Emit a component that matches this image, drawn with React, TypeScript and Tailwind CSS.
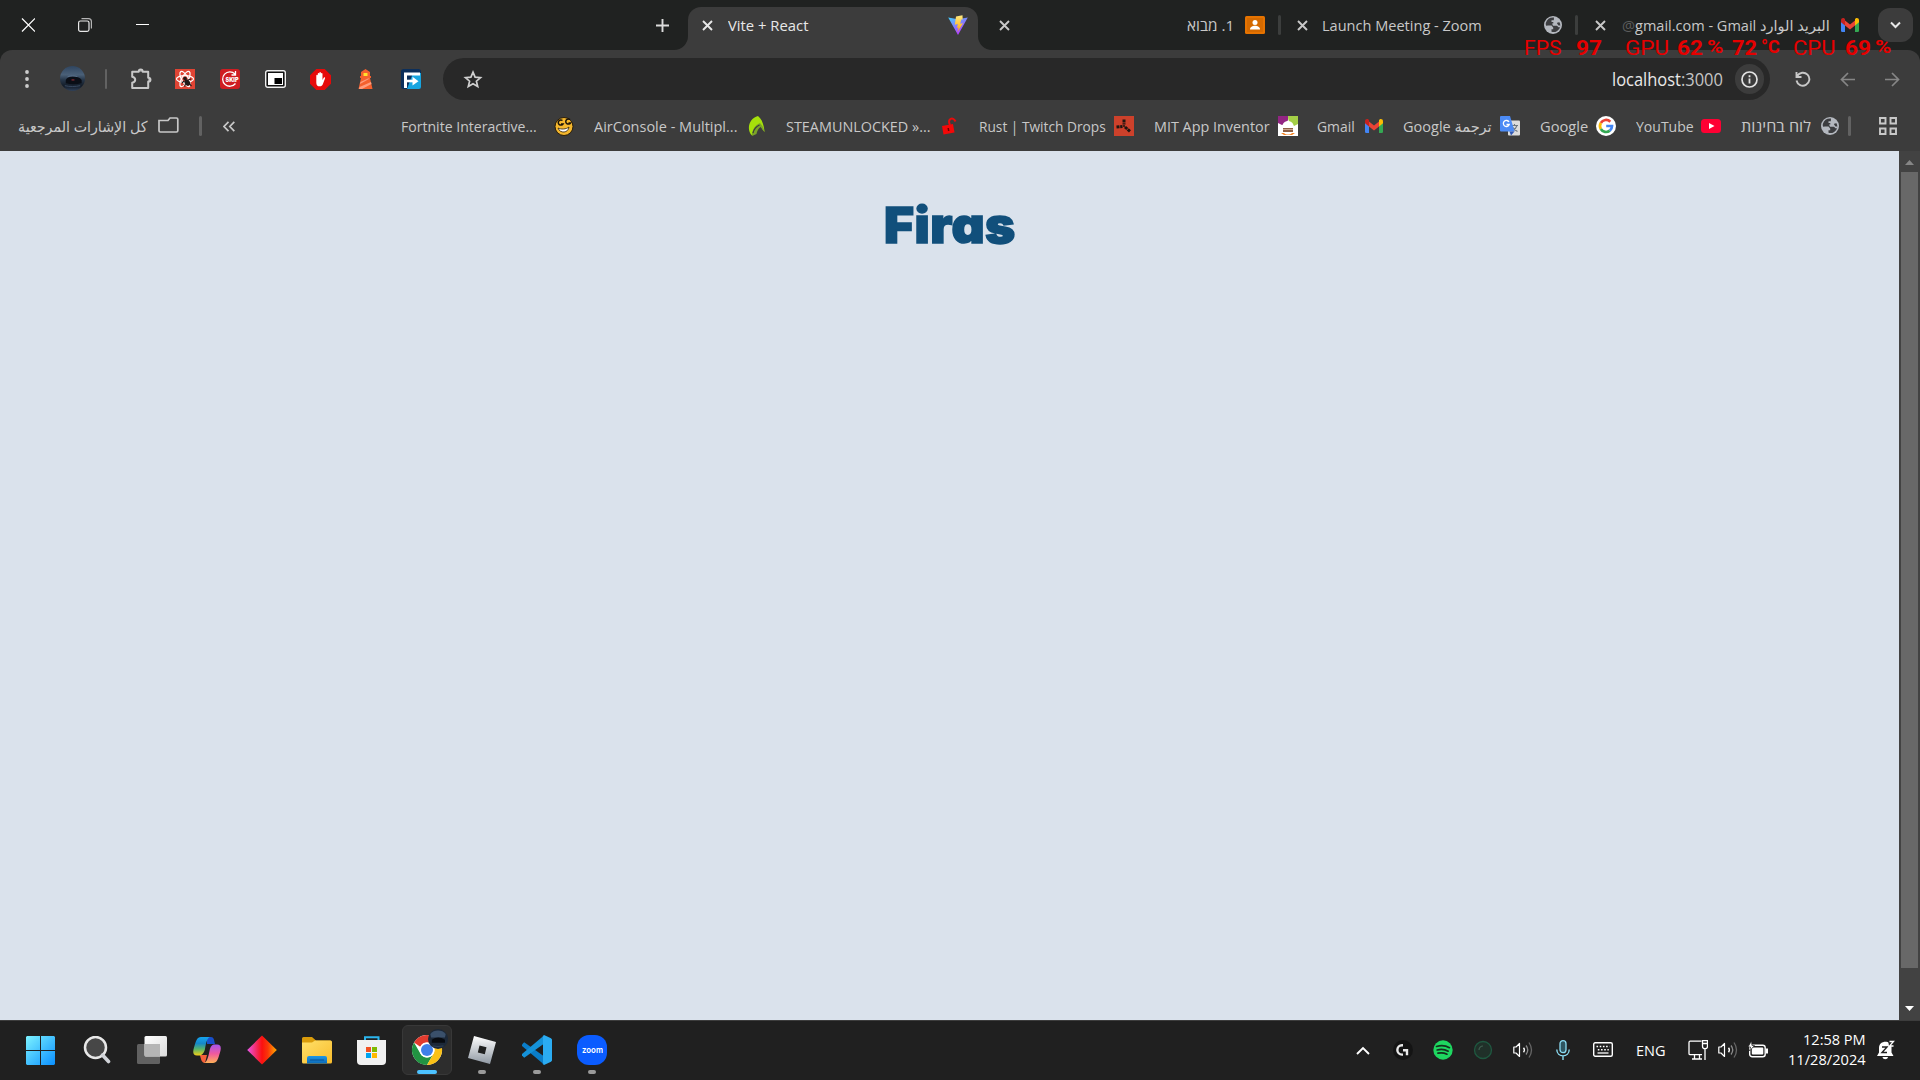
import React, { useLayoutEffect, useRef, useState } from 'react';

type P = { className?: string; children?: React.ReactNode; dir?: 'rtl' | 'ltr' };

/* A single line of text, condensed or widened to fill the width of its box. */
function Fit({ className = '', children, dir = 'ltr' }: P) {
  const outer = useRef<HTMLDivElement>(null);
  const inner = useRef<HTMLSpanElement>(null);
  const [s, setS] = useState(1);
  useLayoutEffect(() => {
    if (outer.current && inner.current) setS(outer.current.clientWidth / inner.current.offsetWidth);
  }, []);
  return (
    <div ref={outer} dir="ltr" className={'shrink-0 whitespace-nowrap ' + className}>
      <span ref={inner} dir={dir} className="inline-block origin-left" style={{ transform: `scaleX(${s})` }}>
        {children}
      </span>
    </div>
  );
}

function Svg({ className = '', vb = '0 0 20 20', children }: P & { vb?: string }) {
  return (
    <svg viewBox={vb} className={'shrink-0 ' + className} fill="none">
      {children}
    </svg>
  );
}

const Cross = ({ className = '' }: P) => (
  <Svg vb="0 0 11 11" className={'h-[11px] w-[11px] ' + className}>
    <path d="M1 1l9 9M10 1l-9 9" stroke="currentColor" strokeWidth="1.9" />
  </Svg>
);

const GmailIcon = ({ className = '' }: P) => (
  <Svg vb="0 0 18 14" className={'h-[14px] w-[18px] ' + className}>
    <path d="M0 3.5h4V14H1.2A1.2 1.2 0 0 1 0 12.8z" fill="#4285f4" />
    <path d="M14 3.5h4v9.300a1.200 1.200 0 0 1-1.200 1.200H14z" fill="#34a853" />
    <path d="M4 2.500l5 4 5-4v5l-5 4-5-4z" fill="#ea4335" />
    <path d="M0 2.200C0 .300 2-.600 3.400.500L4 1v6.500L0 4.300z" fill="#c5221f" />
    <path d="M18 2.200C18 .300 16-.600 14.600.500L14 1v6.500l4-3.200z" fill="#fbbc04" />
  </Svg>
);

const Globe = ({ className = '' }: P) => (
  <Svg vb="0 0 18 18" className={'h-[18px] w-[18px] ' + className}>
    <circle cx="9" cy="9" r="9" fill="#b4b8bf" />
    <path
      d="M10 1.600C6 1.200 3 3.200 2 6.500c-.500 1.500-.200 2.300.200 3.300L4 9.500h3.500l1.700 2v1.800H7.500v2.500c2 .600 4 .200 5.300-.600 2.200-1.300 3.500-3.500 3.500-6 0-1-.300-2-.800-3l-2 .300-.800 1.700H9.300V6H7.500V4.300h2.300z"
      fill="#3c3d40"
    />
    <path d="M8 7.500h5l1.500 2h2v1.800h-2L13 9.800H9z" fill="#b4b8bf" />
  </Svg>
);

const Avatar = ({ className = '' }: P) => (
  <Svg vb="0 0 26 26" className={className}>
    <defs>
      <linearGradient id="sky" x1="0" y1="0" x2="0" y2="1">
        <stop offset="0" stopColor="#2f4560" />
        <stop offset=".35" stopColor="#4a6078" />
        <stop offset=".55" stopColor="#27374a" />
        <stop offset=".8" stopColor="#131c28" />
        <stop offset="1" stopColor="#30415a" />
      </linearGradient>
    </defs>
    <circle cx="13" cy="13" r="13" fill="url(#sky)" />
    <path d="M6 14.500c1-2 3.500-3.500 7.500-3.500s7 1 9 3.500V18q-8.500 2-16.500 0z" fill="#0a0e16" />
    <path d="M8 11c3-1 7-1 10 0" stroke="#5f7896" strokeWidth=".8" />
    <path d="M12 14.500h3" stroke="#a5323a" />
    <path d="M5 20.500c5 1 11 1 16 0" stroke="#3c4e66" />
  </Svg>
);

function TabStrip() {
  return (
    <div className="flex h-[50px] items-center bg-[#202221] text-[15px] text-[#c8c8c8]">
      <Svg vb="0 0 14 14" className="ml-[21px] h-[14px] w-[14px]">
        <path d="M1 .500l13 13M14 .500L1 13.500" stroke="#fff" strokeWidth="1.200" />
      </Svg>
      <Svg vb="0 0 14 14" className="ml-[43px] h-[14px] w-[14px]">
        <rect x=".6" y="3" width="10.400" height="10.400" rx="1.800" stroke="#e8e8e8" strokeWidth="1.200" />
        <path d="M3.500.700h7A2.900 2.900 0 0 1 13.400 3.600v7" stroke="#b5b5b5" strokeWidth="1.200" />
      </Svg>
      <div className="ml-[44px] h-px w-[13px] -translate-y-px bg-white" />
      <Svg vb="0 0 13 13" className="ml-[507px] h-[13px] w-[13px]">
        <path d="M6.500 0v13M0 6.500h13" stroke="#dcdcdc" strokeWidth="1.900" />
      </Svg>
      <Svg vb="0 0 14 14" className="ml-[5px] h-[14px] w-[14px] self-end">
        <path d="M0 14A14 14 0 0 0 14 0v14z" fill="#3c3c3c" />
      </Svg>
      <div className="flex h-[43px] w-[290px] shrink-0 items-center self-end rounded-t-[13px] bg-[#3c3c3c] pb-[7px] text-[#e8e8e8]">
        <Cross className="ml-[14px]" />
        <Fit className="ml-[15px] w-[80px]">Vite + React</Fit>
        <Svg vb="0 0 20 20" className="ml-[140px] h-[20px] w-[20px]">
          <defs>
            <linearGradient id="v1" x1="0" y1="0" x2=".6" y2="1">
              <stop stopColor="#41d1ff" />
              <stop offset="1" stopColor="#bd34fe" />
            </linearGradient>
            <linearGradient id="v2" x1="0" y1="0" x2="0" y2="1">
              <stop stopColor="#ffea83" />
              <stop offset="1" stopColor="#ffa800" />
            </linearGradient>
          </defs>
          <path d="M.200 2.500L10 4.300l9.800-1.800L10 20z" fill="url(#v1)" />
          <path d="M14.500.300L8 1.500 6.800 9.800l3-.700-.800 3.900 1.600-.500-1.100 4.400L15 8.200l-2.800.500 1-4.200h1.500z" fill="url(#v2)" />
        </Svg>
      </div>
      <Svg vb="0 0 14 14" className="h-[14px] w-[14px] self-end">
        <path d="M14 14A14 14 0 0 1 0 0v14z" fill="#3c3c3c" />
      </Svg>
      <Cross className="ml-[7px]" />
      <Fit dir="rtl" className="ml-[177px] w-[47px]">1. מבוא</Fit>
      <Svg vb="0 0 20 18" className="ml-[11px] h-[18px] w-[20px]">
        <rect width="20" height="18" rx="1.500" fill="#e67300" />
        <rect x="2" y="2" width="16" height="14" fill="#d56a00" />
        <circle cx="10" cy="6.500" r="2.500" fill="#fff" />
        <path d="M5 13.500c0-5 10-5 10 0z" fill="#fff" />
      </Svg>
      <div className="ml-[13px] h-[20px] w-[3px] rounded bg-[#3c3e3d]" />
      <Cross className="ml-[16px]" />
      <Fit className="ml-[14px] w-[160px]">Launch Meeting - Zoom</Fit>
      <Globe className="ml-[62px]" />
      <div className="ml-[13px] h-[20px] w-[3px] rounded bg-[#3c3e3d]" />
      <Cross className="ml-[17px]" />
      <Fit dir="rtl" className="ml-[16px] w-[208px]">
        البريد الوارد <bdi dir="ltr"><span className="text-[#5c5d5d]">@</span>gmail.com - Gmail</bdi>
      </Fit>
      <GmailIcon className="ml-[11px]" />
      <div className="ml-[19px] flex h-[34px] w-[35px] shrink-0 items-center justify-center rounded-[12px] bg-[#3c3c3c]">
        <Svg vb="0 0 11 8" className="h-[8px] w-[11px]">
          <path d="M1 1.500l4.500 4.500L10 1.500" stroke="#e8e8e8" strokeWidth="2" />
        </Svg>
      </div>
    </div>
  );
}

function Toolbar() {
  return (
    <div className="bg-[#202221]">
      <div className="flex h-[58px] items-center rounded-t-[12px] bg-[#3c3c3c]">
        <Svg vb="0 0 4 18" className="ml-[25px] h-[18px] w-[4px]">
          <circle cx="2" cy="2" r="1.900" fill="#ccc" />
          <circle cx="2" cy="9" r="1.900" fill="#ccc" />
          <circle cx="2" cy="16" r="1.900" fill="#ccc" />
        </Svg>
        <Avatar className="ml-[31px] h-[25px] w-[25px] -translate-y-px" />
        <div className="ml-[20px] h-[20px] w-[2px] rounded bg-[#626262]" />
        <Svg vb="0 0 21 21" className="ml-[24px] h-[21px] w-[21px] -translate-y-px">
          <path d="M1.200 3.800h6.500c0-3.200 4-3.200 4 0h5.500v6c3 0 3 3.800 0 3.800V20H1.200v-5.200c4-.800 4-5.200 0-6z" stroke="#c8c8c8" strokeWidth="2" strokeLinejoin="round" />
          <path d="M8 3.500a2 2 0 0 1 3.600 0zM17.500 9.800a2 2 0 0 1 0 3.800z" fill="#c8c8c8" />
        </Svg>
        <Svg className="ml-[23px] h-[20px] w-[20px]">
          <rect width="20" height="20" fill="#e04434" />
          <g stroke="#fff" strokeWidth="1.200">
            <ellipse cx="10" cy="10" rx="8.500" ry="3.300" />
            <ellipse cx="10" cy="10" rx="8.500" ry="3.300" transform="rotate(60 10 10)" />
            <ellipse cx="10" cy="10" rx="8.500" ry="3.300" transform="rotate(120 10 10)" />
          </g>
          <circle cx="10" cy="9.500" r="1.800" fill="#201817" />
          <ellipse cx="12.300" cy="13.500" rx="2.500" ry="3.500" transform="rotate(-35 12.300 13.500)" fill="#201817" />
          <path d="M9 12l-2 2M13 11l3-1M14.500 15l2 2M10.500 15l-1 2.500" stroke="#201817" strokeWidth="1.100" />
        </Svg>
        <Svg className="ml-[25px] h-[20px] w-[20px]">
          <rect width="20" height="20" rx="3" fill="#cf1d22" />
          <path d="M15 5A7.200 7.200 0 1 0 15.500 14.500M15.500 2v4h-4" stroke="#fff" strokeWidth="1.300" />
          <rect x="5" y="7" width="15" height="6.500" fill="#cf1d22" />
          <text x="5.500" y="12.800" fontFamily="Inter" fontWeight="900" fontSize="6.500" textLength="13" lengthAdjust="spacingAndGlyphs" fill="#fff">SKIP</text>
        </Svg>
        <Svg vb="0 0 21 18" className="ml-[25px] h-[18px] w-[21px]">
          <rect x=".7" y=".7" width="19.600" height="16.600" rx="2" fill="#111" stroke="#eee" strokeWidth="1.400" />
          <rect x="3" y="3" width="15" height="12" fill="#fff" />
          <rect x="9.500" y="8" width="7.500" height="6" fill="#000" />
        </Svg>
        <Svg className="ml-[24px] h-[21px] w-[21px]">
          <path d="M6 0h8l6 6v8l-6 6H6l-6-6V6z" fill="#e60a0a" />
          <path d="M6 10V6.200c0-1 1.400-1 1.400 0V4.500c0-1 1.500-1 1.500 0v-.800c0-1 1.500-1 1.500 0v.800c0-1 1.500-1 1.500 0v6l1-2c.600-1 1.900-.500 1.400.600l-2 5.200c-.500 1.500-1.500 2.200-2.900 2.200C7 16.500 6 15 6 13z" fill="#fff" />
        </Svg>
        <Svg vb="0 0 15 20" className="ml-[27px] h-[20px] w-[15px]">
          <path d="M3 3l4.500-3L12 3v4h1v2h-1l2.500 11H.500L3 9H2V7h1z" fill="#f4602e" />
          <path d="M2.500 13l7.500-3.500h1.800L2 15zM1.500 18l11.500-5 .500 2L4 20H1z" fill="#ff9d7e" />
          <rect x="5.500" y="4" width="4" height="3" fill="#ffe02d" />
        </Svg>
        <Svg className="ml-[28px] h-[20px] w-[20px]">
          <rect width="20" height="20" rx="2.500" fill="#0c2f5b" />
          <path d="M12 4h8v14a2 2 0 0 1-2 2H6z" fill="#17a5e0" />
          <path d="M4.500 19V5H19" stroke="#fff" strokeWidth="3" />
          <path d="M5 12h8" stroke="#fff" strokeWidth="2.600" />
          <path d="M11.500 7.800l6 4.400-6 4.300z" fill="#fff" />
        </Svg>
        <div className="ml-[22px] flex h-[42px] w-[1327px] shrink-0 items-center rounded-full bg-[#282828]">
          <Svg vb="0 0 20 19" className="ml-[20px] h-[19px] w-[20px]">
            <path d="M10 2.200l2.100 5 5.400.500-4.100 3.500 1.300 5.300L10 13.700l-4.700 2.800 1.300-5.300-4.100-3.500 5.400-.500z" stroke="#d0d0d0" strokeWidth="1.700" />
          </Svg>
          <Fit className="ml-[1129px] w-[111px] text-[17.500px] text-[#e8e8e8]">
            localhost<span className="text-[#c4c4c4]">:3000</span>
          </Fit>
          <div className="ml-[12px] flex h-[30px] w-[29px] shrink-0 items-center justify-center rounded-full bg-[#3c3c3c]">
            <Svg vb="0 0 17 17" className="h-[17px] w-[17px]">
              <circle cx="8.500" cy="8.500" r="7.500" stroke="#e3e3e3" strokeWidth="1.700" />
              <path d="M8.500 4.300v1.900M8.500 7.500v5" stroke="#e3e3e3" strokeWidth="1.800" />
            </Svg>
          </div>
        </div>
        <Svg vb="0 0 16 16" className="ml-[25px] h-[16px] w-[16px]">
          <path d="M1.500 1v5h5M2.200 5A6.500 6.500 0 1 1 1.500 9.500" stroke="#c8c8c8" strokeWidth="1.900" />
        </Svg>
        <Svg vb="0 0 15 15" className="ml-[29px] h-[15px] w-[15px]">
          <path d="M15 7.500H1.500M8 1L1.500 7.500 8 14" stroke="#868686" strokeWidth="1.700" />
        </Svg>
        <Svg vb="0 0 15 15" className="ml-[30px] h-[15px] w-[15px]">
          <path d="M0 7.500h13.500M7 1l6.500 6.500L7 14" stroke="#868686" strokeWidth="1.700" />
        </Svg>
      </div>
    </div>
  );
}

function Bookmarks() {
  return (
    <div className="flex h-[43px] items-center bg-[#3c3c3c] pb-[7px] text-[15px] leading-[20px] text-[#c8c8c8]">
      <Fit dir="rtl" className="ml-[18px] w-[129px]">كل الإشارات المرجعية</Fit>
      <Svg vb="0 0 21 16" className="ml-[11px] h-[16px] w-[21px] -translate-y-px">
        <path d="M1 3.500h9L12 1h6.500a1.300 1.300 0 0 1 1.300 1.300v11.400a1.300 1.300 0 0 1-1.300 1.300H2.300A1.300 1.300 0 0 1 1 13.700z" stroke="#c8c8c8" strokeWidth="1.700" />
      </Svg>
      <div className="ml-[20px] h-[20px] w-[3px] rounded bg-[#626262]" />
      <Svg vb="0 0 12 11" className="ml-[21px] h-[11px] w-[12px]">
        <path d="M5.500.800L1 5.500l4.500 4.700M11.300.800L6.800 5.500l4.500 4.700" stroke="#c8c8c8" strokeWidth="1.700" />
      </Svg>
      <Fit className="ml-[166px] w-[136px]">Fortnite Interactive...</Fit>
      <Svg className="ml-[17px] h-[20px] w-[20px]">
        <circle cx="10" cy="10.500" r="9" fill="#f5b82e" stroke="#2b1d08" />
        <path d="M4 12c3 1.500 8 1.500 11-1-.500 6-9 7-11 1z" fill="#fff" stroke="#2b1d08" strokeWidth=".8" />
        <path d="M8.500 4.500a2.600 2.600 0 1 0 .500 3.500H7M16 3.500a2.600 2.600 0 1 0 .500 3.500h-2" stroke="#1c1409" strokeWidth="1.500" />
      </Svg>
      <Fit className="ml-[20px] w-[143px]">AirConsole - Multipl...</Fit>
      <Svg vb="0 0 17 20" className="ml-[11px] h-[20px] w-[17px]">
        <path d="M4 19.500C-2 14 1 2 10 0c4 3 6 9 6.500 16L11 8C6 11 5 15 4 19.500z" fill="#a6e10b" />
        <path d="M4 20c0-6 3-11 8-13 3 3 4 6 4.500 9l-2.500-3-1-2c-3 1-4 5-4.500 7z" fill="#7ba428" />
        <path d="M5 17c1-4 3-6.500 6.500-8" stroke="#3c3c3c" strokeWidth="1.300" />
      </Svg>
      <Fit className="ml-[21px] w-[145px]">STEAMUNLOCKED »...</Fit>
      <Svg vb="0 0 15 18" className="ml-[11px] h-[18px] w-[15px]">
        <path d="M0 9l11-2 1.500 8.500-11 2z" fill="#f40808" />
        <path d="M8 8C5 2 11-1 13.500 4.500" stroke="#e80c0c" strokeWidth="2" />
        <path d="M6.200 11l.5 3" stroke="#6a0000" strokeWidth="1.500" />
      </Svg>
      <Fit className="ml-[22px] w-[127px]">Rust | Twitch Drops</Fit>
      <Svg className="ml-[8px] h-[20px] w-[20px]">
        <rect width="20" height="20" fill="#cd412b" />
        <path d="M10 3.500v5M2.500 11l6-.500M11 11l5 4.500" stroke="#1e1510" strokeWidth="3" strokeDasharray="3 .7" />
        <circle cx="10" cy="10" r="1" fill="#1e1510" />
      </Svg>
      <Fit className="ml-[20px] w-[116px]">MIT App Inventor</Fit>
      <Svg className="ml-[8px] h-[20px] w-[20px]">
        <rect width="20" height="20" fill="#fff" />
        <path d="M0 0h10c1 5-2 9-6 9L0 7z" fill="#922583" />
        <path d="M10 0h10v8l-4 2c-4-1-6-5-6-10z" fill="#a5cf47" />
        <path d="M4 11c1-8 11-8 12 0z" fill="#fff" />
        <rect x="5" y="12" width="10" height="4" fill="#8d5e43" />
        <path d="M3 17h3c2 2 6 2 8 0h3l-3 2H6z" fill="#f58220" />
        <path d="M5 13.500h10" stroke="#c9a58d" />
      </Svg>
      <Fit className="ml-[19px] w-[38px]">Gmail</Fit>
      <GmailIcon className="ml-[10px]" />
      <Fit dir="rtl" className="ml-[20px] w-[89px]">ترجمة Google</Fit>
      <Svg className="ml-[8px] h-[20px] w-[20px]">
        <rect x="8" y="4.500" width="12" height="15" rx="1" fill="#dcdcdc" />
        <path d="M11 9.500h7M14.500 8v1.500M17 9.500c-1 3-2.500 4.500-4.500 5.500M12.500 11c1 2 3 3.500 5 4.500" stroke="#6d7780" strokeWidth="1.100" />
        <path d="M1 0h9l4.500 15.500H1a1 1 0 0 1-1-1V1a1 1 0 0 1 1-1z" fill="#4c8bf5" />
        <path d="M9.500 15.500h5L11 19.500z" fill="#3058b5" />
        <path d="M9 6A3 3 0 1 0 9.200 8.500H6.500" stroke="#fff" strokeWidth="1.300" />
      </Svg>
      <Fit className="ml-[20px] w-[48px]">Google</Fit>
      <Svg className="ml-[8px] h-[20px] w-[20px]">
        <circle cx="10" cy="10" r="10" fill="#fff" />
        <path d="M14.300 5.700A6 6 0 0 0 4.800 7" stroke="#ea4335" strokeWidth="2.700" />
        <path d="M4.800 7a6 6 0 0 0 0 6" stroke="#fbbc05" strokeWidth="2.700" />
        <path d="M4.800 13a6 6 0 0 0 9 1.600" stroke="#34a853" strokeWidth="2.700" />
        <path d="M13.800 14.600A6 6 0 0 0 16 10H10.200" stroke="#4285f4" strokeWidth="2.700" />
      </Svg>
      <Fit className="ml-[20px] w-[58px]">YouTube</Fit>
      <Svg vb="0 0 20 14" className="ml-[7px] h-[14px] w-[20px]">
        <rect width="20" height="14" rx="3.500" fill="#ff0033" />
        <path d="M8 4l5.500 3L8 10z" fill="#fff" />
      </Svg>
      <Fit dir="rtl" className="ml-[20px] w-[70px]">לוח בחינות</Fit>
      <Globe className="ml-[10px]" />
      <div className="ml-[9px] h-[20px] w-[3px] rounded bg-[#626262]" />
      <Svg vb="0 0 18 18" className="ml-[28px] h-[18px] w-[18px]">
        <path d="M1 1h5.500v5.500H1zM11.500 1H17v5.500h-5.500zM1 11.500h5.500V17H1zM11.500 11.500H17V17h-5.500z" stroke="#c8c8c8" strokeWidth="1.900" />
      </Svg>
    </div>
  );
}

function Page() {
  return (
    <div className="flex h-[869px] bg-[#dae2ec]">
      <div className="flex flex-1 justify-center pt-[36px]">
        <Fit className="h-[72px] w-[132px] font-['Inter'] text-[49px] font-black leading-[77px] tracking-[0.5px] text-[#114f7b] [-webkit-text-stroke:1.500px_#114f7b] [font-feature-settings:'cv11','ss03']">
          Firas
        </Fit>
      </div>
      <div className="flex w-[21px] flex-col items-center bg-[#424242]">
        <Svg vb="0 0 9 5" className="mt-[9px] h-[5px] w-[9px]">
          <path d="M4.500 0L9 5H0z" fill="#868686" />
        </Svg>
        <div className="mt-[7px] h-[796px] w-[17px] bg-[#686868]" />
        <Svg vb="0 0 9 5" className="mt-[38px] h-[5px] w-[9px]">
          <path d="M4.500 5L9 0H0z" fill="#fff" />
        </Svg>
      </div>
    </div>
  );
}

const Speaker = ({ className = '' }: P) => (
  <Svg className={'h-[20px] w-[20px] ' + className}>
    <path d="M.8 7h2.200L6.500 3.500v13L3 13H.800z" stroke="#fff" strokeWidth="1.200" strokeLinejoin="round" />
    <path d="M10.500 7.800q1.800 2.200 0 4.400" stroke="#fff" strokeWidth="1.400" />
    <path d="M13 5.500q3.500 4.500 0 9" stroke="#8a8a8a" strokeWidth="1.300" />
    <path d="M16 2.500q5 7.500 0 15" stroke="#666" strokeWidth="1.300" />
  </Svg>
);

function Taskbar() {
  return (
    <div className="flex h-[60px] items-center border-t border-[#3d3d3d] bg-[#202020] pb-px text-[15px] text-white">
      <Svg vb="0 0 29 29" className="ml-[26px] h-[29px] w-[29px]">
        <defs>
          <linearGradient id="win" x1="0" y1="0" x2="29" y2="29" gradientUnits="userSpaceOnUse">
            <stop stopColor="#7df3ff" />
            <stop offset="1" stopColor="#0a8fff" />
          </linearGradient>
        </defs>
        <path d="M1 0h13v14H0V1zM15 0h13l1 1v13H15zM0 15h14v14H1l-1-1zM15 15h14v13l-1 1H15z" fill="url(#win)" />
      </Svg>
      <Svg vb="0 0 28 28" className="ml-[28px] h-[28px] w-[28px]">
        <circle cx="12.500" cy="11.500" r="10.500" fill="#474747" stroke="#e8e8e8" strokeWidth="2.500" />
        <path d="M19.500 19l6 6.500" stroke="#d0d3d8" strokeWidth="3.600" strokeLinecap="round" />
      </Svg>
      <Svg vb="0 0 30 28" className="ml-[26px] h-[28px] w-[30px]">
        <defs>
          <linearGradient id="tv" x1="0" y1="0" x2="1" y2="1">
            <stop stopColor="#fff" />
            <stop offset="1" stopColor="#dcdcdc" />
          </linearGradient>
        </defs>
        <rect y="8" width="23" height="20" rx="1.500" fill="#616161" />
        <rect x="7.500" width="22.500" height="20.500" rx="1.500" fill="url(#tv)" />
        <path d="M7.500 8H23v12.500H9a1.500 1.500 0 0 1-1.500-1.500z" fill="#b5b5b5" />
      </Svg>
      <Svg vb="0 0 28 26" className="ml-[26px] h-[26px] w-[28px]">
        <defs>
          <linearGradient id="cpa" x1="0" y1="0" x2="0" y2="1">
            <stop stopColor="#15a4ef" />
            <stop offset=".35" stopColor="#1688c9" />
            <stop offset=".65" stopColor="#57b56a" />
            <stop offset="1" stopColor="#f3cf17" />
          </linearGradient>
          <linearGradient id="cpb" x1="0" y1="0" x2="0" y2="1">
            <stop stopColor="#a554ef" />
            <stop offset=".5" stopColor="#f0599d" />
            <stop offset="1" stopColor="#ffb157" />
          </linearGradient>
        </defs>
        <path d="M14 0h4c3 0 3 3 4 7h-8z" fill="#184fcb" />
        <path d="M7 18h7l-2 8c-3 0-4-3-5-8z" fill="#f4603a" />
        <path d="M8 0h9c-3 1-4 6-5 12-1 4-3 6.500-6 6.500H4c-4 0-4.500-3-3-8C3 4 4 0 8 0z" fill="url(#cpa)" />
        <path d="M20 26h-9c3-1 4-5 5.500-12C17.500 9 19 7.500 22 7.500h2c4 0 4.500 3 3 8C25 22 24 26 20 26z" fill="url(#cpb)" />
      </Svg>
      <Svg vb="0 0 30 30" className="ml-[26px] h-[30px] w-[30px]">
        <defs>
          <linearGradient id="dia" x1="0" y1="0" x2="1" y2="0">
            <stop stopColor="#e956e9" />
            <stop offset=".5" stopColor="#fb1010" />
            <stop offset=".7" stopColor="#f93808" />
            <stop offset="1" stopColor="#ffae00" />
          </linearGradient>
        </defs>
        <path d="M15 .5L29.800 15 15 29.500.200 15z" fill="url(#dia)" />
      </Svg>
      <Svg vb="0 0 30 27" className="ml-[25px] h-[27px] w-[30px]">
        <defs>
          <linearGradient id="fol" x1="0" y1="0" x2="1" y2="1">
            <stop stopColor="#ffe069" />
            <stop offset="1" stopColor="#f9bc2c" />
          </linearGradient>
          <linearGradient id="folb" x1="0" y1="0" x2="0" y2="1">
            <stop stopColor="#1f97e5" />
            <stop offset="1" stopColor="#0c6ab8" />
          </linearGradient>
        </defs>
        <path d="M0 1.500A1.500 1.500 0 0 1 1.500 0H10l4 3.500h14A1.500 1.500 0 0 1 29.500 5v5H0z" fill="#d99b0a" />
        <path d="M0 5.500h10l3-2h15.500A1.500 1.500 0 0 1 30 5v20a1.500 1.500 0 0 1-1.500 1.500h-27A1.500 1.500 0 0 1 0 25z" fill="url(#fol)" />
        <path d="M5 26.500V21a2 2 0 0 1 2-2h16a2 2 0 0 1 2 2v5.500z" fill="url(#folb)" />
        <path d="M8.500 23h13" stroke="#095096" strokeWidth="1.200" strokeLinecap="round" />
      </Svg>
      <Svg vb="0 0 29 29" className="ml-[25px] h-[29px] w-[29px]">
        <path d="M8 5V1.200h13.500V5" stroke="#2bb6ee" strokeWidth="2" />
        <path d="M0 4h29v21a4 4 0 0 1-4 4H4a4 4 0 0 1-4-4z" fill="#f1f1f1" />
        <path d="M9 11h5v5H9z" fill="#f25022" />
        <path d="M15 11h5v5h-5z" fill="#7fba00" />
        <path d="M9 17h5v5H9z" fill="#00a4ef" />
        <path d="M15 17h5v5h-5z" fill="#ffb900" />
      </Svg>
      <div className="ml-[16px] flex h-[50px] w-[50px] shrink-0 flex-col items-center rounded-[6px] border border-[#383838] bg-[#2d2d2d] pt-[3px]">
        <Svg vb="0 0 38 38" className="h-[38px] w-[38px] translate-x-[2px]">
          <g transform="translate(2 6)">
            <circle cx="15" cy="15" r="15" fill="#fff" />
            <path d="M15 0A15 15 0 0 1 28 7.500H15a7.500 7.500 0 0 0-6.800 4.300L2 7.500A15 15 0 0 1 15 0z" fill="#e33b2e" />
            <path d="M2 7.500A15 15 0 0 0 15 30l6.500-11.200a7.500 7.500 0 0 1-13 0z" fill="#229342" />
            <path d="M28 7.500A15 15 0 0 1 15 30l6.500-11.200A7.500 7.500 0 0 0 15 7.500z" fill="#fbc116" />
            <circle cx="15" cy="15" r="7.500" fill="#fff" />
            <circle cx="15" cy="15" r="6" fill="#3f80ea" />
          </g>
          <g transform="translate(18 0) scale(.77)">
            <circle cx="13" cy="13" r="13" fill="#1c2838" />
            <path d="M3 6.500a13 13 0 0 1 20 0L22 11H4z" fill="#3a506b" />
            <path d="M5 14q8-6 17 0v4H5z" fill="#080b11" />
            <path d="M6 22q7 1.500 14 0" stroke="#344860" />
          </g>
        </Svg>
        <div className="mt-[3px] h-[4px] w-[20px] rounded-full bg-[#4cc2ff]" />
      </div>
      <div className="ml-[16px] flex w-[28px] shrink-0 flex-col items-center pt-[10px]">
        <Svg vb="0 0 28 28" className="h-[28px] w-[28px]">
          <defs>
            <linearGradient id="rbx" x1="0" y1="0" x2="0" y2="1">
              <stop stopColor="#fff" />
              <stop offset="1" stopColor="#8f98a3" />
            </linearGradient>
          </defs>
          <path fillRule="evenodd" d="M6 0l22 6-6 22-22-6zM11.500 9.500l-1.700 7 7 1.700 1.700-7z" fill="url(#rbx)" />
        </Svg>
        <div className="mt-[6px] h-[4px] w-[8px] rounded-full bg-[#9a9a9a]" />
      </div>
      <div className="ml-[26px] flex w-[30px] shrink-0 flex-col items-center pt-[9px]">
        <Svg vb="0 0 30 30" className="h-[30px] w-[30px]">
          <path d="M0 9.500l2.200-2.200L23 22l-1 7.500L0 11z" fill="#0a7dc9" />
          <path d="M0 20.500l2.200 2.200L23 8l-1-7.500L0 19z" fill="#1592d9" />
          <path d="M22 0l7 3.300 1 1.200v21l-1 1.200L22 30l-1.500-1.500 1.500-.500V2l-1.500-.500z" fill="#2bacf2" />
          <path d="M22 2v26" stroke="#2bacf2" strokeWidth="2" />
        </Svg>
        <div className="mt-[5px] h-[4px] w-[8px] rounded-full bg-[#9a9a9a]" />
      </div>
      <div className="ml-[25px] flex w-[30px] shrink-0 flex-col items-center pt-[9px]">
        <div className="flex h-[30px] w-[30px] items-center justify-center rounded-[12px] bg-[#0b5cff]">
          <Fit className="w-[21px] pb-[2px] font-['Inter'] text-[9px] font-semibold leading-none">zoom</Fit>
        </div>
        <div className="mt-[5px] h-[4px] w-[8px] rounded-full bg-[#9a9a9a]" />
      </div>

      <Svg vb="0 0 14 9" className="ml-[749px] h-[9px] w-[14px]">
        <path d="M1 8l6-6 6 6" stroke="#fff" strokeWidth="1.900" />
      </Svg>
      <Svg className="ml-[23px] h-[20px] w-[20px]">
        <circle cx="10" cy="10" r="10" fill="#141414" />
        <path d="M10 5.300H9a4.500 4.500 0 0 0 0 9.300h1M10 10.200h4v5" stroke="#e8e8e8" strokeWidth="2.400" />
      </Svg>
      <Svg className="ml-[20px] h-[20px] w-[20px]">
        <circle cx="10" cy="10" r="9.700" fill="#1ed760" />
        <path d="M3.500 6.500c4.500-1.300 9-1 13 1.200M4.200 10c4-1 7.500-.700 11 1.200M5 13.200c3-.700 6-.500 9 1" stroke="#14301d" strokeWidth="1.700" strokeLinecap="round" />
      </Svg>
      <Svg className="ml-[20px] h-[20px] w-[20px]">
        <circle cx="10" cy="10" r="8.500" fill="#203029" stroke="#1f5840" strokeWidth="1.300" />
        <path d="M6 10a4 4 0 0 1 4-4" stroke="#3f5f50" strokeWidth="1.200" />
      </Svg>
      <Speaker className="ml-[20px]" />
      <Svg vb="0 0 14 20" className="ml-[23px] h-[20px] w-[14px]">
        <rect x="4" y=".7" width="6" height="12" rx="3" fill="#2e5560" stroke="#8bdcf3" strokeWidth="1.300" />
        <path d="M.8 9.500c0 8.500 12.400 8.500 12.400 0M7 16v4" stroke="#8bdcf3" strokeWidth="1.400" />
      </Svg>
      <Svg vb="0 0 20 15" className="ml-[23px] h-[15px] w-[20px] -translate-y-px">
        <rect x=".7" y=".7" width="18.600" height="13.600" rx="1.500" stroke="#fff" strokeWidth="1.400" />
        <path d="M3.500 4.500h13M4.800 7.800h11" stroke="#fff" strokeWidth="1.500" strokeDasharray="1.600 1.600" />
        <path d="M4.500 11h11" stroke="#fff" strokeWidth="1.300" />
      </Svg>
      <Fit className="ml-[23px] w-[30px]">ENG</Fit>
      <Svg className="ml-[22px] h-[20px] w-[20px]">
        <path d="M13.500 1.200H2.200A1.200 1.200 0 0 0 1 2.400v11a1.200 1.200 0 0 0 1.200 1.200H14M4 19h10M6.500 15v4M11.500 15v4" stroke="#fff" strokeWidth="1.300" />
        <path d="M14.500.700h5v5.500a2.500 2.500 0 0 1-5 0zM17 8.500V20M14.500 3.500h5" stroke="#fff" strokeWidth="1.300" />
      </Svg>
      <Speaker className="ml-[10px]" />
      <Svg vb="0 0 20 17" className="ml-[10px] h-[17px] w-[20px] -translate-y-px">
        <rect x="1.700" y="4.200" width="15.500" height="11.600" rx="2.500" stroke="#fff" strokeWidth="1.400" />
        <rect x="3.800" y="6.500" width="11.500" height="7" rx="1" fill="#fff" />
        <path d="M18 7.500h2v5h-2z" fill="#fff" />
        <path d="M3.500 0L0 6h2.500L1.500 10 6.500 4.500H4z" fill="#fff" stroke="#202020" strokeWidth=".7" />
      </Svg>
      <div className="ml-[20px] flex w-[78px] shrink-0 flex-col items-end pb-[3px] leading-[20px]">
        <Fit className="w-[63px]">12:58 PM</Fit>
        <Fit className="w-[78px]">11/28/2024</Fit>
      </div>
      <Svg vb="0 0 18 20" className="ml-[11px] h-[20px] w-[18px]">
        <path d="M2 8C2 0 14 0 14.500 7v5.500L16.500 16H0l2-3.500zM5.500 17h5.500c-.500 3-5 3-5.500 0z" fill="#fff" />
        <path d="M5 7h5l-5 5.500h5" stroke="#202020" strokeWidth="1.400" />
        <path d="M11 0h7v6h-6z" fill="#202020" />
        <path d="M12.500 1.500h4l-4 4.500h4" stroke="#fff" strokeWidth="1.300" />
      </Svg>
    </div>
  );
}

/* Hardware monitor readout drawn on top of every window. */
function StatsOverlay() {
  return (
    <div className="pointer-events-none absolute left-[1524px] top-[36px] flex font-['Roboto'] text-[20px] leading-[24px] text-[#e60000]">
      <Fit className="w-[38px]">FPS</Fit>
      <Fit className="ml-[14px] w-[26px] font-bold">97</Fit>
      <Fit className="ml-[23px] w-[44px]">GPU</Fit>
      <Fit className="ml-[8px] w-[26px] font-bold">62</Fit>
      <Fit className="ml-[4px] w-[16px] -translate-y-px text-[18px] font-bold">%</Fit>
      <Fit className="ml-[9px] w-[25px] font-bold">72</Fit>
      <Fit className="ml-[4px] w-[19px] -translate-y-px text-[18px] font-bold">°C</Fit>
      <Fit className="ml-[13px] w-[43px]">CPU</Fit>
      <Fit className="ml-[9px] w-[26px] font-bold">69</Fit>
      <Fit className="ml-[4px] w-[16px] -translate-y-px text-[18px] font-bold">%</Fit>
    </div>
  );
}

export default function App() {
  return (
    <div className="relative h-[1080px] w-[1920px] overflow-hidden bg-[#202020] font-['Open_Sans','Noto_Sans','DejaVu_Sans',sans-serif]">
      <TabStrip />
      <Toolbar />
      <Bookmarks />
      <Page />
      <Taskbar />
      <StatsOverlay />
    </div>
  );
}
